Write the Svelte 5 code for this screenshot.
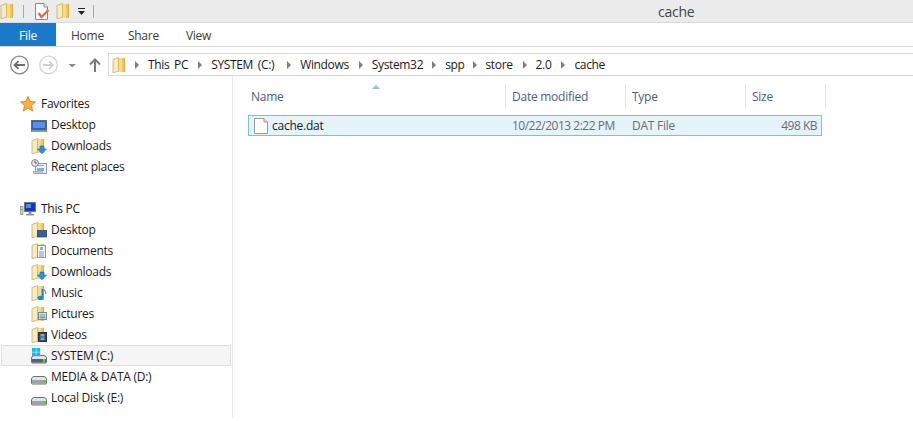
<script>
  const crumbs = ['This PC', 'SYSTEM (C:)', 'Windows', 'System32', 'spp', 'store', '2.0', 'cache'];
  const favorites = [
    { name: 'Desktop', icon: 'monitor' },
    { name: 'Downloads', icon: 'downloads' },
    { name: 'Recent places', icon: 'recent' }
  ];
  const pc = [
    { name: 'Desktop', icon: 'fdesktop' },
    { name: 'Documents', icon: 'fdocs' },
    { name: 'Downloads', icon: 'downloads' },
    { name: 'Music', icon: 'fmusic' },
    { name: 'Pictures', icon: 'fpics' },
    { name: 'Videos', icon: 'fvideos' },
    { name: 'SYSTEM (C:)', icon: 'sysdrive', active: true },
    { name: 'MEDIA & DATA (D:)', icon: 'drive' },
    { name: 'Local Disk (E:)', icon: 'drive' }
  ];
</script>

{#snippet folderBase()}
  <path d="M6 1 H13 V15 H6 Z" fill="#f0c75e" />
  <path d="M6 1 H10 V15 H6 Z" fill="#f7dc8e" />
  <path d="M12 1 H13 V15 H12 Z" fill="#d9ae4c" />
  <path d="M1 2.500 L6.500 0.500 V14 L1 16 Z" fill="#f8ebbd" />
  <path d="M1 2.500 L6.500 0.500 M1 2.500 V16 L6.500 14" fill="none" stroke="#c9ad6a" stroke-width="0.8" />
  <path d="M6.500 0.500 V14" stroke="#dcb85f" stroke-width="1" />
{/snippet}

{#snippet icon(kind)}
  <svg class="ico" viewBox="0 0 16 16" width="16" height="16">
    {#if kind === 'monitor'}
      <rect x="0.500" y="3.500" width="15" height="11" fill="#2f62c0" stroke="#5a6a80" />
      <rect x="2" y="5" width="12" height="6" fill="#5b8fdd" />
      <rect x="0.500" y="13" width="15" height="2" fill="#8b98a8" />
    {:else if kind === 'recent'}
      <rect x="4.500" y="4.500" width="11" height="10" fill="#f0f3f6" stroke="#8d99a5" />
      <rect x="6" y="9" width="7" height="3" fill="#7fb0dc" />
      <rect x="7" y="6" width="6" height="1" fill="#9aa6b2" />
      <rect x="2.500" y="12.500" width="9" height="2" fill="#c4ccd4" stroke="#8d99a5" stroke-width="0.6" />
      <circle cx="4" cy="4" r="3.400" fill="#e6ebef" stroke="#75828f" />
      <path d="M4 2 V4 H6" fill="none" stroke="#4d5a66" />
    {:else if kind === 'drive' || kind === 'sysdrive'}
      <path d="M0.500 10 Q1 7.500 3 7.500 H13 Q15 7.500 15.500 10 V14 Q15.500 15 14.500 15 H1.500 Q0.500 15 0.500 14 Z" fill="#e2e5e7" stroke="#69737a" />
      <rect x="1" y="11" width="14" height="3.500" fill={kind === 'sysdrive' ? '#4f6470' : '#9aa3a9'} />
      <rect x="12" y="11" width="2" height="3.500" fill="#6fc72a" />
      {#if kind === 'sysdrive'}
        <g fill="#19b4ea">
          <rect x="1" y="0" width="3.800" height="3.800" />
          <rect x="5.400" y="0" width="3.800" height="3.800" />
          <rect x="1" y="4.400" width="3.800" height="3.800" />
          <rect x="5.400" y="4.400" width="3.800" height="3.800" />
        </g>
      {/if}
    {:else}
      {@render folderBase()}
      {#if kind === 'downloads'}
        <path d="M9 8 H13 V11 H15.500 L11 15.800 L6.500 11 H9 Z" fill="#2a8fdc" stroke="#1b6cab" stroke-width="0.6" />
      {:else if kind === 'fdesktop'}
        <rect x="6.500" y="8.500" width="9" height="6" fill="#2f62a8" stroke="#45525f" />
        <rect x="6" y="14" width="10" height="1.400" fill="#45525f" />
      {:else if kind === 'fdocs'}
        <rect x="6.500" y="2.500" width="8" height="12" fill="#f2f4f7" stroke="#8d99a5" />
        <path d="M8 9 H13 M8 11 H13 M8 13 H13" stroke="#8d99a5" />
        <rect x="9" y="4" width="3" height="3" fill="#7fb0dc" />
      {:else if kind === 'fmusic'}
        <path d="M11.500 4 V12.500" stroke="#1f7fc4" stroke-width="1.600" />
        <path d="M12 4 Q15 6 14.800 9" fill="none" stroke="#3ca0e0" stroke-width="1.200" />
        <ellipse cx="9.500" cy="13" rx="2.800" ry="2.200" fill="#1f87cf" />
      {:else if kind === 'fpics'}
        <rect x="7.500" y="6.500" width="8" height="7" fill="#eef2f5" stroke="#7d8a96" />
        <rect x="8.500" y="7.500" width="6" height="3" fill="#8fc4dd" />
        <rect x="8.500" y="10.500" width="6" height="2" fill="#78a878" />
      {:else if kind === 'fvideos'}
        <rect x="7.500" y="5.500" width="8" height="9" fill="#3d4a56" stroke="#27313a" />
        <rect x="9.500" y="7" width="4" height="2.600" fill="#6fa9d8" />
        <rect x="9.500" y="10.500" width="4" height="2.600" fill="#6fa9d8" />
      {/if}
    {/if}
  </svg>
{/snippet}

<div class="window">
  <div class="titlebar">
    <svg class="ico qat-folder" viewBox="0 0 14 16" width="14" height="16">{@render folderBase()}</svg>
    <span class="qat-sep first"></span>
    <svg class="qat-doc" viewBox="0 0 16 17" width="16" height="17">
      <path d="M1.500 0.500 H10 L13.500 4 V16.500 H1.500 Z" fill="#fff" stroke="#8a8a8a" />
      <path d="M10 0.500 V4 H13.500" fill="#eee" stroke="#8a8a8a" />
      <path d="M4.500 10 L7.500 14 L14.500 7" fill="none" stroke="#e8683a" stroke-width="2.200" />
    </svg>
    <svg class="ico qat-folder2" viewBox="0 0 14 16" width="14" height="16">{@render folderBase()}</svg>
    <svg class="qat-drop" viewBox="0 0 8 8" width="8" height="8">
      <rect x="0" y="0" width="7" height="1" fill="#222" />
      <path d="M0 3 H7 L3.500 7 Z" fill="#222" />
    </svg>
    <span class="qat-sep"></span>
    <span class="title">cache</span>
  </div>

  <div class="ribbon">
    <span class="tab file">File</span>
    <span class="tab home">Home</span>
    <span class="tab share">Share</span>
    <span class="tab view">View</span>
  </div>

  <div class="addressbar">
    <svg class="nav" viewBox="0 0 108 22" width="108" height="22">
      <circle cx="19.500" cy="11" r="8.800" fill="#fff" stroke="#8a8a8a" stroke-width="1.300" />
      <path d="M25 11 H15 M18.500 7.200 L14.500 11 L18.500 14.800" fill="none" stroke="#6d6d6d" stroke-width="1.800" />
      <circle cx="48.500" cy="11" r="8.800" fill="#fff" stroke="#d4d4d4" stroke-width="1.300" />
      <path d="M43 11 H53 M49 7.200 L53 11 L49 14.800" fill="none" stroke="#d0d0d0" stroke-width="1.800" />
      <path d="M68.500 10 H76 L72.200 13.500 Z" fill="#8a8a8a" />
      <path d="M95 18 V6 M90 10.500 L95 5.500 L100 10.500" fill="none" stroke="#7a7a7a" stroke-width="2" />
    </svg>
    <div class="path">
      <svg class="ico" viewBox="0 0 14 16" width="14" height="16">{@render folderBase()}</svg>
      {#each crumbs as c}
        <span class="arrow"></span>
        <span class="crumb">{c}</span>
      {/each}
    </div>
  </div>

  <div class="main">
    <nav class="sidebar">
      <div class="group">
        <div class="row head">
          <svg class="ico" viewBox="0 0 16 16" width="16" height="16">
            <path d="M8 0.500 L10.200 5.400 L15.500 6 L11.500 9.600 L12.600 15 L8 12.200 L3.400 15 L4.500 9.600 L0.500 6 L5.800 5.400 Z" fill="#fbb13c" stroke="#e8833a" />
          </svg>
          <span>Favorites</span>
        </div>
        {#each favorites as f}
          <div class="row">{@render icon(f.icon)}<span>{f.name}</span></div>
        {/each}
      </div>
      <div class="group">
        <div class="row head">
          <svg class="ico" viewBox="0 0 16 16" width="16" height="16">
            <rect x="0.500" y="5.500" width="2.500" height="8" fill="#cfd5da" stroke="#7b858d" stroke-width="0.700" />
            <rect x="1" y="8" width="1.500" height="1.500" fill="#7ed321" />
            <rect x="4.500" y="1.500" width="11" height="9" fill="#1434c8" stroke="#6f7a84" />
            <rect x="6" y="3" width="5" height="4" fill="#4f8be8" />
            <path d="M8.500 11 H11.500 V13 H14 V14.500 H6 V13 H8.500 Z" fill="#8d969c" />
          </svg>
          <span>This PC</span>
        </div>
        {#each pc as p}
          <div class="row" class:active={p.active}>{@render icon(p.icon)}<span>{p.name}</span></div>
        {/each}
      </div>
    </nav>

    <section class="content">
      <span class="sort"></span>
      <div class="cols header">
        <span class="c-name">Name</span>
        <span class="c-date">Date modified</span>
        <span class="c-type">Type</span>
        <span class="c-size">Size</span>
      </div>
      <div class="cols file-row">
        <span class="c-name">
          <svg viewBox="0 0 14 16" width="14" height="16">
            <path d="M0.500 0.500 H10 L13.500 4 V15.500 H0.500 Z" fill="#fdfdfd" stroke="#9a9a9a" />
            <path d="M10 0.500 V4 H13.500" fill="#e8e8e8" stroke="#9a9a9a" />
          </svg>
          <b>cache.dat</b>
        </span>
        <span class="c-date">10/22/2013 2:22 PM</span>
        <span class="c-type">DAT File</span>
        <span class="c-size">498 KB</span>
      </div>
    </section>
  </div>
</div>

<style>
  :global(body) { background: #fff; overflow: hidden; }
  .window {
    width: 913px; height: 421px; display: flex; flex-direction: column;
    font-family: "Open Sans", "Noto Sans", sans-serif; font-size: 12px; color: #1a1a1a;
    letter-spacing: -0.25px; overflow: hidden;
  }
  .ico { flex-shrink: 0; display: block; }

  .titlebar {
    height: 22px; flex-shrink: 0; background: #ececec; border-bottom: 1px solid #d9d9d9;
    display: flex; align-items: center;
  }
  .qat-sep { width: 1px; height: 13px; background: #a8a8a8; margin-left: 9px; }
  .qat-sep.first { margin-right: 10px; }
  .qat-doc { display: block; }
  .qat-folder2 { margin-left: 6px; }
  .qat-drop { margin-left: 8px; margin-top: 2px; }
  .qat-drop + .qat-sep { margin-left: 7px; }
  .title { margin-left: 564px; font-size: 14px; color: #444; }

  .ribbon {
    height: 23px; flex-shrink: 0; border-bottom: 1px solid #dadada;
    display: flex; align-items: stretch;
  }
  .tab { display: flex; align-items: center; padding-top: 1px; color: #3b3b3b; }
  .file {
    width: 56px; justify-content: center; background: #1979ca; color: #fff;
  }
  .home { margin-left: 15px; }
  .share { margin-left: 24px; }
  .view { margin-left: 27px; }

  .addressbar {
    height: 29px; flex-shrink: 0; display: flex; align-items: flex-end;
  }
  .nav { display: block; flex-shrink: 0; }
  .path {
    flex: 1; height: 23px; border: 1px solid #d9d9d9; border-right: none; box-sizing: border-box;
    display: flex; align-items: center; padding-left: 3px; gap: 9px;
    letter-spacing: -0.35px; word-spacing: 2px;
  }
  .crumb { margin-right: 1px; }
  .crumb:nth-of-type(4) { margin-right: 4px; }
  .crumb:nth-of-type(8) { margin-right: 0; }
  .crumb:nth-of-type(10) { margin-right: -1px; }
  .arrow {
    width: 0; height: 0; border-left: 4px solid #7f7f7f;
    border-top: 4px solid transparent; border-bottom: 4px solid transparent;
  }

  .main { flex: 1; display: flex; min-height: 0; }
  .sidebar {
    width: 232px; flex-shrink: 0; border-right: 1px solid #e8e8e8;
    padding-top: 17px; height: 326px;
  }
  .group { margin-bottom: 21px; }
  .row {
    height: 21px; box-sizing: border-box; display: flex; align-items: center; gap: 4px;
    padding-left: 30px; margin: 0 1px;
  }
  .row.head { padding-left: 19px; gap: 5px; }
  .row.active { background: #f5f5f5; border: 1px solid #dedede; padding-left: 29px; }

  .content { flex: 1; position: relative; padding: 8px 0 0 15px; }
  .sort {
    position: absolute; left: 139px; top: 9px; width: 0; height: 0;
    border-left: 4px solid transparent; border-right: 4px solid transparent;
    border-bottom: 4px solid #9fb6c9;
  }
  .cols { display: grid; grid-template-columns: 258px 120px 120px 80px; width: 578px; }
  .header { height: 25px; align-items: center; color: #4c607a; }
  .header span {
    height: 25px; display: flex; align-items: center; border-right: 1px solid #e5e5e5;
    padding-left: 3px; box-sizing: border-box;
  }
  .header .c-date, .header .c-type, .header .c-size { padding-left: 6px; }
  .file-row {
    margin-top: 6px; height: 21px; box-sizing: border-box; width: 574px;
    background: #e5f3fb; border: 1px solid #7ac0e6; align-items: center; color: #6d6d6d;
    grid-template-columns: 256px 120px 120px 76px;
  }
  .file-row .c-name { display: flex; align-items: center; gap: 4px; padding-left: 5px; }
  .file-row b { font-weight: 400; color: #1a1a1a; }
  .file-row .c-date, .file-row .c-type { padding-left: 7px; }
  .file-row .c-date { letter-spacing: -0.5px; }
  .file-row .c-size { text-align: right; padding-right: 4px; letter-spacing: -0.5px; }
</style>
